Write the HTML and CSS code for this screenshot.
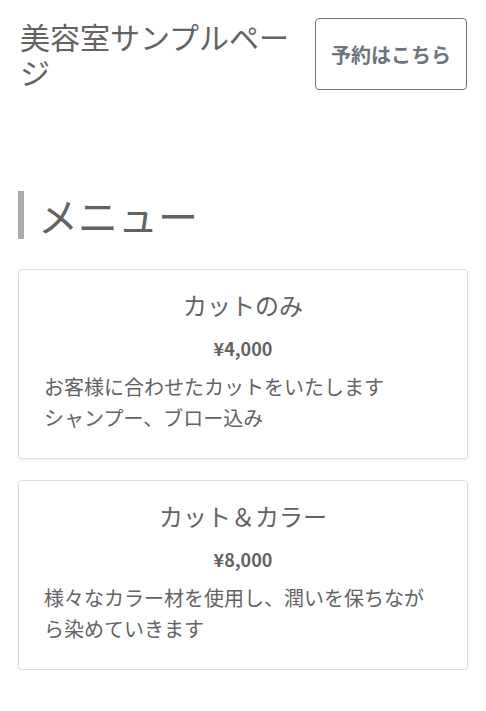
FILE: index.html
```html
<!DOCTYPE html>
<html lang="ja">
<head>
<meta charset="utf-8">
<title>美容室サンプルページ</title>
<link rel="stylesheet" href="styles.css">
</head>
<body>
<header class="site-header">
  <h1 class="site-title">美容室サンプルページ</h1>
  <a class="reserve-btn" href="#">予約はこちら</a>
</header>
<main class="content">
  <h2 class="section-title">メニュー</h2>
  <div class="menu-list">
    <section class="menu-card">
      <h3 class="menu-name">カットのみ</h3>
      <p class="menu-price">¥4,000</p>
      <p class="menu-desc">お客様に合わせたカットをいたします<br>シャンプー、ブロー込み</p>
    </section>
    <section class="menu-card">
      <h3 class="menu-name">カット＆カラー</h3>
      <p class="menu-price">¥8,000</p>
      <p class="menu-desc">様々なカラー材を使用し、潤いを保ちながら染めていきます</p>
    </section>
  </div>
</main>
</body>
</html>
```

FILE: styles.css
```css
* { box-sizing: border-box; }
html, body { margin: 0; padding: 0; background: #fff; }
body {
  font-family: "Noto Sans CJK JP", "Noto Sans", sans-serif;
  color: #636363;
}
.site-header {
  display: flex;
  justify-content: space-between;
  align-items: flex-start;
  gap: 20px;
  padding: 18px 19px 0 20px;
}
.site-title {
  flex: 1;
  margin: 1px 0 0 0;
  font-size: 30px;
  font-weight: normal;
  line-height: 35px;
}
.reserve-btn {
  flex: none;
  width: 152px;
  height: 72px;
  display: flex;
  align-items: center;
  justify-content: center;
  border: 1px solid #6c757d;
  border-radius: 4px;
  color: #6c757d;
  font-size: 20px;
  font-weight: bold;
  text-decoration: none;
}
.content {
  padding: 0 18px 0 18px;
}
.section-title {
  margin: 101px 0 30px 0;
  border-left: 6px solid #aaaaaa;
  padding-left: 14px;
  font-size: 40px;
  font-weight: normal;
  line-height: 48px;
}
.menu-list {
  display: flex;
  flex-direction: column;
  gap: 21px;
}
.menu-card {
  border: 1px solid #dddddd;
  border-radius: 4px;
  box-shadow: 0 1px 3px rgba(0,0,0,0.08);
  padding: 20px 25px 24px 25px;
  height: 190px;
}
.menu-name {
  margin: 0;
  text-align: center;
  font-size: 24px;
  font-weight: normal;
  line-height: 30px;
}
.menu-price {
  margin: 15px 0 0 0;
  text-align: center;
  font-size: 18px;
  font-weight: bold;
  line-height: 27px;
}
.menu-desc {
  margin: 9px 0 0 0;
  font-size: 20px;
  line-height: 31px;
}
```
